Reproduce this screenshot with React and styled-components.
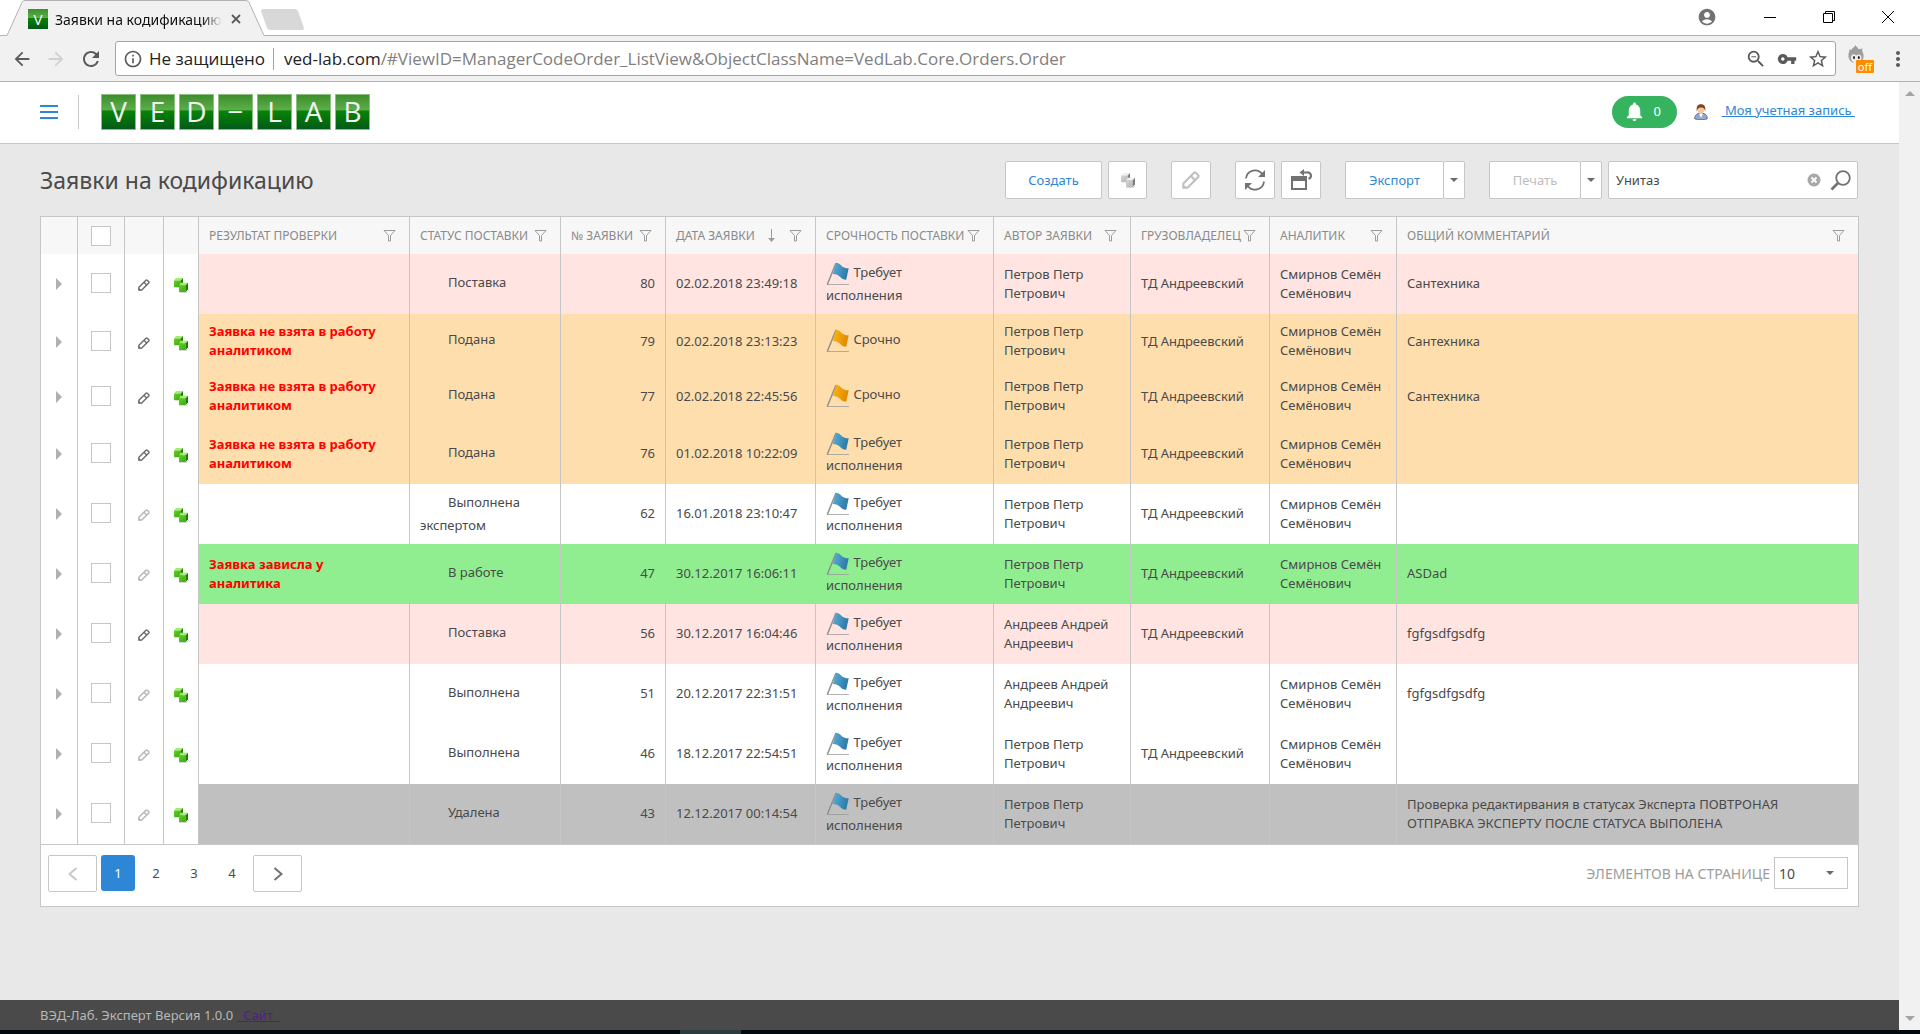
import React, { useState } from 'react'
import styled, { createGlobalStyle, css } from 'styled-components'
import {
    MdAccountCircle,
    MdArrowBack,
    MdArrowForward,
    MdInfoOutline,
    MdMoreVert,
    MdRefresh,
    MdStarBorder,
    MdVpnKey,
    MdZoomOut,
    MdNotifications,
} from 'react-icons/md'

const orders = [
    { id: 80, tone: '#ffe4e1', editable: true, check: '', status: 'Поставка', date: '02.02.2018 23:49:18', urgency: 'Требует исполнения', author: 'Петров Петр Петрович', owner: 'ТД Андреевский', analyst: 'Смирнов Семён Семёнович', comment: 'Сантехника' },
    { id: 79, tone: '#ffdead', editable: true, check: 'Заявка не взята в работу аналитиком', status: 'Подана', date: '02.02.2018 23:13:23', urgency: 'Срочно', author: 'Петров Петр Петрович', owner: 'ТД Андреевский', analyst: 'Смирнов Семён Семёнович', comment: 'Сантехника' },
    { id: 77, tone: '#ffdead', editable: true, check: 'Заявка не взята в работу аналитиком', status: 'Подана', date: '02.02.2018 22:45:56', urgency: 'Срочно', author: 'Петров Петр Петрович', owner: 'ТД Андреевский', analyst: 'Смирнов Семён Семёнович', comment: 'Сантехника' },
    { id: 76, tone: '#ffdead', editable: true, check: 'Заявка не взята в работу аналитиком', status: 'Подана', date: '01.02.2018 10:22:09', urgency: 'Требует исполнения', author: 'Петров Петр Петрович', owner: 'ТД Андреевский', analyst: 'Смирнов Семён Семёнович', comment: '' },
    { id: 62, tone: '#ffffff', editable: false, check: '', status: 'Выполнена экспертом', date: '16.01.2018 23:10:47', urgency: 'Требует исполнения', author: 'Петров Петр Петрович', owner: 'ТД Андреевский', analyst: 'Смирнов Семён Семёнович', comment: '' },
    { id: 47, tone: '#90ee90', editable: false, check: 'Заявка зависла у аналитика', status: 'В работе', date: '30.12.2017 16:06:11', urgency: 'Требует исполнения', author: 'Петров Петр Петрович', owner: 'ТД Андреевский', analyst: 'Смирнов Семён Семёнович', comment: 'ASDad' },
    { id: 56, tone: '#ffe4e1', editable: true, check: '', status: 'Поставка', date: '30.12.2017 16:04:46', urgency: 'Требует исполнения', author: 'Андреев Андрей Андреевич', owner: 'ТД Андреевский', analyst: '', comment: 'fgfgsdfgsdfg' },
    { id: 51, tone: '#ffffff', editable: false, check: '', status: 'Выполнена', date: '20.12.2017 22:31:51', urgency: 'Требует исполнения', author: 'Андреев Андрей Андреевич', owner: '', analyst: 'Смирнов Семён Семёнович', comment: 'fgfgsdfgsdfg' },
    { id: 46, tone: '#ffffff', editable: false, check: '', status: 'Выполнена', date: '18.12.2017 22:54:51', urgency: 'Требует исполнения', author: 'Петров Петр Петрович', owner: 'ТД Андреевский', analyst: 'Смирнов Семён Семёнович', comment: '' },
    { id: 43, tone: '#c0c0c0', editable: false, check: '', status: 'Удалена', date: '12.12.2017 00:14:54', urgency: 'Требует исполнения', author: 'Петров Петр Петрович', owner: '', analyst: '', comment: 'Проверка редактирвания в статусах Эксперта ПОВТРОНАЯ ОТПРАВКА ЭКСПЕРТУ ПОСЛЕ СТАТУСА ВЫПОЛЕНА' },
]

const columns = [
    { title: 'Результат проверки', width: 211 },
    { title: 'Статус поставки', width: 151 },
    { title: '№ заявки', width: 105 },
    { title: 'Дата заявки', width: 150, sorted: true },
    { title: 'Срочность поставки', width: 178 },
    { title: 'Автор заявки', width: 137 },
    { title: 'Грузовладелец', width: 139 },
    { title: 'Аналитик', width: 127 },
    { title: 'Общий комментарий' },
]

/* ---------- icons ---------- */

const FunnelIcon = () => (
    <svg width="13" height="12" viewBox="0 0 13 12" fill="none" stroke="#9c9c9c" aria-hidden="true">
        <path d="M1 .5h11L7.500 5.500v5.500h-2V5.500z" />
    </svg>
)

const SortIcon = () => (
    <svg width="9" height="13" viewBox="0 0 9 13" aria-hidden="true">
        <path d="M4.500 0v10" stroke="#9c9c9c" fill="none" />
        <path d="M1 9h7l-3.500 4z" fill="#9c9c9c" />
    </svg>
)

const PencilIcon = ({ size = 12, color }) => (
    <svg width={size} height={size} viewBox="0 0 12 12" fill="none" stroke={color} strokeWidth="1.400" strokeLinejoin="round" aria-hidden="true">
        <path d="M.9 11.100V8.300L8 1.200q.6-.5 1.200 0l1.600 1.600q.5.600 0 1.200L3.700 11.100z" />
        <path d="M5.900 3.300l2.800 2.800" />
        <path d="M.5 11.500V8.600l2.900 2.900z" fill={color} stroke="none" />
    </svg>
)

const cubeTones = {
    green: ['#a4ec74', '#66d02a', '#37a80c', '#1a7d04'],
    grey: ['#f0f0f0', '#d6d6d6', '#b4b4b4', '#7d7d7d'],
}

const CubesIcon = ({ tone = 'green' }) => {
    const [top, light, dark, side] = cubeTones[tone]
    return (
        <svg width="16" height="16" viewBox="0 0 16 16" aria-hidden="true">
            <defs>
                <linearGradient id={`cube-${tone}`} x1="0" y1="0" x2="1" y2="1">
                    <stop offset="0" stopColor={light} />
                    <stop offset="1" stopColor={dark} />
                </linearGradient>
            </defs>
            <path d="M6 15.500h7.500l2-2" stroke="#000" opacity=".15" fill="none" />
            <path d="M1 3.500L3 1h7L7.800 3.500z" fill={top} />
            <path d="M1 3.500h6.800v6.700H1.500L1 9.700z" fill={`url(#cube-${tone})`} />
            <path d="M7.800 3.500L10 1v6.500l-2.200 2.700z" fill={side} />
            <path d="M6 8.200l2-2.500h7l-2.200 2.500z" fill={top} />
            <path d="M6 8.200h6.800V15H6.500L6 14.500z" fill={`url(#cube-${tone})`} />
            <path d="M12.800 8.200L15 5.700v6.600L12.800 15z" fill={side} />
        </svg>
    )
}

const flagTones = {
    blue: ['#5cb0dc', '#2d7ba6'],
    orange: ['#fdb913', '#e08a00'],
}

const FlagIcon = ({ tone }) => (
    <svg width="24" height="24" viewBox="0 0 24 24" aria-hidden="true">
        <defs>
            <linearGradient id={`flag-${tone}`} x1="0" y1="0" x2="1" y2="0.3">
                <stop offset="0" stopColor={flagTones[tone][0]} />
                <stop offset="1" stopColor={flagTones[tone][1]} />
            </linearGradient>
        </defs>
        <path d="M1.500 22.500h21" stroke="#9a9a9a" strokeWidth="1.200" strokeLinecap="round" opacity=".75" />
        <path d="M1.500 22L9.800 1.500" stroke="#8f8f8f" strokeWidth="1.500" strokeLinecap="round" />
        <path d="M10 .8c2 .1 3.500.7 5.200 2.600 1.600 1.900 3.900 2.700 7.500 2.900L20.200 17.800c-2.700 0-4.700-1.200-6.200-3-1.600-1.900-3.900-2.800-7.200-2.900z" fill={`url(#flag-${tone})`} />
    </svg>
)

const RefreshIcon = () => (
    <svg width="22" height="22" viewBox="0 0 22 22" fill="none" stroke="#727272" strokeWidth="1.800" aria-hidden="true">
        <path d="M2 9.500A9 9 0 0 1 18.500 5.500M20 12.500A9 9 0 0 1 3.500 16.500" />
        <path d="M21 1v7h-7zM1 21v-7h7z" fill="#727272" stroke="none" />
    </svg>
)

const ResetViewIcon = () => (
    <svg width="22" height="22" viewBox="0 0 22 22" aria-hidden="true">
        <path d="M1 7h16v14H1zM3 12v7h12v-7z" fill="#727272" fillRule="evenodd" />
        <path d="M13 3.500h4a3.200 3.200 0 0 1 1.500 6.300" fill="none" stroke="#727272" strokeWidth="2.200" />
        <path d="M9.500 3.500L14 0v7z" fill="#727272" />
    </svg>
)

const MagnifierIcon = () => (
    <svg width="21" height="21" viewBox="0 0 21 21" fill="none" stroke="#727272" aria-hidden="true">
        <circle cx="13" cy="8" r="6.800" strokeWidth="1.800" />
        <path d="M8 13l-6.500 6.500" strokeWidth="2.600" />
    </svg>
)

const ClearIcon = () => (
    <svg width="14" height="14" viewBox="0 0 14 14" aria-hidden="true">
        <circle cx="7" cy="7" r="6.500" fill="#a8a8a8" />
        <path d="M4.500 4.500l5 5M9.500 4.500l-5 5" stroke="#fff" strokeWidth="1.800" />
    </svg>
)

const PersonIcon = () => (
    <svg width="14" height="16" viewBox="0 0 14 16" aria-hidden="true">
        <path d="M.7 14.800c0-3 1.300-5.600 6.300-5.600s6.300 2.600 6.300 5.600c-2.300 1.200-10.300 1.200-12.600 0z" fill="#93a9cb" stroke="#4c5f80" strokeWidth=".8" />
        <path d="M5 9.500l2 4.500 2-4.500z" fill="#fff" />
        <ellipse cx="7" cy="5.800" rx="3.300" ry="3.800" fill="#f0c9a0" />
        <path d="M2.800 7.500C2 2 4.300.2 7 .2S12 2 11.200 7.500C10.600 4.500 9.500 3.300 6.500 3.600 4.500 3.800 3.600 5 2.800 7.500z" fill="#7d4420" />
    </svg>
)

const FoxIcon = () => (
    <svg width="16" height="20" viewBox="0 0 16 20" aria-hidden="true">
        <path d="M7.500 0c.3 1.500 2.500 2.300 3 4.300L14.500 3.500c-.6 1.500-.3 2.500.2 3.500 1.300 3 1.300 6.500-.7 9-2.200 3-9.300 3-11.700 0C0 13 0 9.500 1.200 6.500L1.700 4l1.600 1.300C3.800 2.800 6.800 2.500 7.500 0z" fill="#9e9e9e" />
        <path d="M3 12c1-3.500 3-3 5.300-1.500C10.500 9 12.700 8.800 13.500 12c.5 3-2 6.500-5.200 6.500S2.500 15 3 12z" fill="#ececec" />
        <ellipse cx="6" cy="12.500" rx="1" ry="1.500" fill="#222" />
        <ellipse cx="10.800" cy="12.500" rx="1" ry="1.500" fill="#222" />
    </svg>
)

const ChevronIcon = ({ flip, color }) => (
    <svg width="10" height="14" viewBox="0 0 10 14" fill="none" stroke={color} strokeWidth="2" aria-hidden="true">
        <path d={flip ? 'M8.500 1l-7 6 7 6' : 'M1.500 1l7 6-7 6'} />
    </svg>
)

/* ---------- page ---------- */

function BrowserChrome() {
    return (
        <>
            <TabStrip>
                <TabArea>
                    <TabShape viewBox="0 0 310 36" aria-hidden="true">
                        <path d="M0 35.500H7L22 2.500Q23 .5 25 .5H246Q248 .5 249 2.500L264 35.500H310V37H0z" fill="#f1f1f1" />
                        <path d="M264 35.500H310V37H264z" fill="#fff" />
                        <path d="M0 35.500H7L22 2.500Q23 .5 25 .5H246Q248 .5 249 2.500L264 35.500H310" fill="none" stroke="#b2b2b2" />
                        <path d="M263 9h32q2 0 3 2l6 17q0 2-2 2h-32q-2 0-3-2l-6-17q0-2 2-2z" fill="#d8d8d8" />
                    </TabShape>
                    <TabBody>
                        <Favicon>V</Favicon>
                        <TabTitle>Заявки на кодификацию</TabTitle>
                        <ChromeButton type="button" aria-label="Закрыть вкладку" $w={14}>
                            <svg width="10" height="10" viewBox="0 0 10 10" stroke="#5a5a5a" strokeWidth="1.800"><path d="M1 1l8 8M9 1L1 9" /></svg>
                        </ChromeButton>
                    </TabBody>
                </TabArea>
                <WindowControls>
                    <ChromeButton type="button" aria-label="Профиль" $w={20}><MdAccountCircle size={20} color="#727272" /></ChromeButton>
                    <ChromeButton type="button" aria-label="Свернуть" $w={12}>
                        <svg width="12" height="12" viewBox="0 0 12 12" stroke="#000"><path d="M0 6.500h12" /></svg>
                    </ChromeButton>
                    <ChromeButton type="button" aria-label="Развернуть" $w={12}>
                        <svg width="12" height="12" viewBox="0 0 12 12" stroke="#000" fill="none"><path d="M.5 2.500h9v9h-9zM2.500 2V.5h9v9H10" /></svg>
                    </ChromeButton>
                    <ChromeButton type="button" aria-label="Закрыть" $w={12}>
                        <svg width="12" height="12" viewBox="0 0 12 12" stroke="#000"><path d="M0 0l12 12M12 0L0 12" /></svg>
                    </ChromeButton>
                </WindowControls>
            </TabStrip>
            <AddressRow>
                <ChromeButton type="button" aria-label="Назад" $w={22}><MdArrowBack size={22} color="#5a5a5a" /></ChromeButton>
                <ChromeButton type="button" aria-label="Вперёд" $w={22}><MdArrowForward size={22} color="#d0d0d0" /></ChromeButton>
                <ChromeButton type="button" aria-label="Обновить" $w={24}><MdRefresh size={24} color="#5a5a5a" /></ChromeButton>
                <Omnibox>
                    <MdInfoOutline size={20} color="#5a5a5a" />
                    <Insecure>Не защищено</Insecure>
                    <Url><b>ved-lab.com</b>/#ViewID=ManagerCodeOrder_ListView&amp;ObjectClassName=VedLab.Core.Orders.Order</Url>
                    <OmniActions>
                        <MdZoomOut size={22} />
                        <MdVpnKey size={20} />
                        <MdStarBorder size={22} />
                    </OmniActions>
                </Omnibox>
                <Extension>
                    <FoxIcon />
                    <OffBadge>off</OffBadge>
                </Extension>
                <ChromeButton type="button" aria-label="Меню" $w={24}><MdMoreVert size={24} color="#5a5a5a" /></ChromeButton>
            </AddressRow>
        </>
    )
}

function OrderRow({ order, selected, onToggle }) {
    const urgent = order.urgency === 'Срочно'
    return (
        <tr>
            <ToolCell $raised>
                <Expander type="button" aria-label={`Развернуть заявку ${order.id}`} />
            </ToolCell>
            <ToolCell $raised>
                <CheckBox type="checkbox" aria-label={`Выбрать заявку ${order.id}`} checked={selected} onChange={() => onToggle(order.id)} />
            </ToolCell>
            <ToolCell>
                <IconButton type="button" aria-label="Изменить" disabled={!order.editable}>
                    <PencilIcon color={order.editable ? '#6a6a6a' : '#b5b5b5'} />
                </IconButton>
            </ToolCell>
            <ToolCell>
                <IconButton type="button" aria-label="Копировать"><CubesIcon /></IconButton>
            </ToolCell>
            <Cell $tone={order.tone} $narrow><Warning>{order.check}</Warning></Cell>
            <Cell $tone={order.tone}><StatusGap />{order.status}</Cell>
            <Cell $tone={order.tone} $right>{order.id}</Cell>
            <Cell $tone={order.tone}>{order.date}</Cell>
            <Cell $tone={order.tone} $narrow><FlagIcon tone={urgent ? 'orange' : 'blue'} /> {order.urgency}</Cell>
            <Cell $tone={order.tone}>{order.author}</Cell>
            <Cell $tone={order.tone}>{order.owner}</Cell>
            <Cell $tone={order.tone}>{order.analyst}</Cell>
            <Cell $tone={order.tone}><Comment>{order.comment}</Comment></Cell>
        </tr>
    )
}

function App() {
    const [selected, setSelected] = useState([])
    const [query, setQuery] = useState('Унитаз')

    const toggle = (id) => {
        setSelected(selected.includes(id) ? selected.filter((x) => x !== id) : [...selected, id])
    }

    const toggleAll = () => {
        setSelected(selected.length === orders.length ? [] : orders.map((o) => o.id))
    }

    return (
        <Screen>
            <GlobalStyle />
            <BrowserChrome />
            <Viewport>
                <Page>
                    <Header>
                        <MenuButton type="button" aria-label="Навигация"><i /><i /><i /></MenuButton>
                        <Logo href="#">
                            {'VED−LAB'.split('').map((letter, i) => <LogoTile key={i}>{letter}</LogoTile>)}
                        </Logo>
                        <BellButton type="button" aria-label="Уведомления">
                            <MdNotifications size={23} />
                            <span>0</span>
                        </BellButton>
                        <PersonIcon />
                        <AccountLink href="#account">&nbsp;Моя учетная запись&nbsp;</AccountLink>
                    </Header>

                    <Main>
                        <TitleRow>
                            <Title>Заявки на кодификацию</Title>
                            <Toolbar>
                                <Group>
                                    <ToolButton type="button" $w={97}>Создать</ToolButton>
                                    <ToolButton type="button" $w={39} aria-label="Клонировать"><CubesIcon tone="grey" /></ToolButton>
                                </Group>
                                <Group>
                                    <ToolButton type="button" $w={40} disabled aria-label="Изменить"><PencilIcon size={18} color="#c0c0c0" /></ToolButton>
                                </Group>
                                <Group>
                                    <ToolButton type="button" $w={40} aria-label="Обновить"><RefreshIcon /></ToolButton>
                                    <ToolButton type="button" $w={40} aria-label="Сбросить настройки"><ResetViewIcon /></ToolButton>
                                </Group>
                                <Split>
                                    <ToolButton type="button" $w={99}>Экспорт</ToolButton>
                                    <ToolButton type="button" $w={22} aria-label="Форматы экспорта"><Caret /></ToolButton>
                                </Split>
                                <Group>
                                    <Split>
                                        <ToolButton type="button" $w={92} disabled>Печать</ToolButton>
                                        <ToolButton type="button" $w={22} aria-label="Варианты печати"><Caret /></ToolButton>
                                    </Split>
                                    <SearchBox>
                                        <input type="text" aria-label="Поиск" value={query} onChange={(e) => setQuery(e.target.value)} />
                                        <IconButton type="button" aria-label="Очистить" onClick={() => setQuery('')}><ClearIcon /></IconButton>
                                        <IconButton type="button" aria-label="Найти"><MagnifierIcon /></IconButton>
                                    </SearchBox>
                                </Group>
                            </Toolbar>
                        </TitleRow>

                        <GridFrame>
                            <Table>
                                <colgroup>
                                    <Col $w={37} />
                                    <Col $w={47} />
                                    <Col $w={39} />
                                    <Col $w={35} />
                                    {columns.map((c) => <Col key={c.title} $w={c.width} />)}
                                </colgroup>
                                <thead>
                                    <tr>
                                        <HeadCell />
                                        <HeadCell $tool>
                                            <CheckBox type="checkbox" aria-label="Выбрать все" checked={selected.length === orders.length} onChange={toggleAll} />
                                        </HeadCell>
                                        <HeadCell />
                                        <HeadCell />
                                        {columns.map((c) => (
                                            <HeadCell key={c.title}>
                                                <HeadContent>
                                                    <span>{c.title}</span>
                                                    {c.sorted && <SortIcon />}
                                                    <FunnelIcon />
                                                </HeadContent>
                                            </HeadCell>
                                        ))}
                                    </tr>
                                </thead>
                                <tbody>
                                    {orders.map((order) => (
                                        <OrderRow key={order.id} order={order} selected={selected.includes(order.id)} onToggle={toggle} />
                                    ))}
                                </tbody>
                            </Table>
                            <Pager>
                                <PageArrow type="button" disabled aria-label="Предыдущая"><ChevronIcon flip color="#c8c8c8" /></PageArrow>
                                <PageNumber type="button" $active>1</PageNumber>
                                <PageNumber type="button">2</PageNumber>
                                <PageNumber type="button">3</PageNumber>
                                <PageNumber type="button">4</PageNumber>
                                <PageArrow type="button" aria-label="Следующая"><ChevronIcon color="#727272" /></PageArrow>
                                <PageSize>
                                    <label htmlFor="page-size">Элементов на странице</label>
                                    <SelectWrap>
                                        <select id="page-size" defaultValue="10">
                                            <option>10</option>
                                            <option>20</option>
                                            <option>50</option>
                                        </select>
                                        <Caret />
                                    </SelectWrap>
                                </PageSize>
                            </Pager>
                        </GridFrame>
                    </Main>

                    <Footer>
                        ВЭД-Лаб. Эксперт Версия 1.0.0 <a href="#site">&nbsp;&nbsp;Сайт&nbsp;&nbsp;</a>
                    </Footer>
                </Page>
                <ScrollTrack>
                    <ScrollArrow $up />
                    <ScrollArrow />
                </ScrollTrack>
            </Viewport>
            <Taskbar><span /></Taskbar>
        </Screen>
    )
}

const GlobalStyle = createGlobalStyle`
    * {
        box-sizing: border-box;
    }
    body {
        margin: 0;
        font-family: 'Noto Sans', 'Open Sans', sans-serif;
        font-size: 13px;
        line-height: 19px;
        color: #4a4a4a;
    }
    button, input, select {
        font: inherit;
        color: inherit;
        margin: 0;
    }
    svg {
        flex: none;
    }
`;

const Screen = styled.div`
    min-height: 100vh;
    display: flex;
    flex-direction: column;
`;

const ChromeButton = styled.button`
    width: ${(p) => p.$w}px;
    padding: 0;
    border: 0;
    background: none;
    display: flex;
    justify-content: center;
    align-items: center;
    flex: none;
`;

const TabStrip = styled.div`
    height: 36px;
    display: flex;
    justify-content: space-between;
    background: linear-gradient(#fff 35px, #b2b2b2 35px);
`;

const TabArea = styled.div`
    width: 310px;
    position: relative;
`;

const TabShape = styled.svg`
    position: absolute;
    inset: 0;
    width: 310px;
    height: 36px;
`;

const TabBody = styled.div`
    position: relative;
    height: 36px;
    padding: 2px 67px 0 28px;
    display: flex;
    align-items: center;
    gap: 7px;
`;

const glossyGreen = css`
    color: #f2f2f2;
    background: linear-gradient(#3c8f2c 0%, #5fae4c 45%, #078407 46%, #046a10 80%, #04591a 100%);
`;

const Favicon = styled.span`
    ${glossyGreen}
    width: 20px;
    height: 20px;
    font-size: 15px;
    line-height: 20px;
    text-align: center;
`;

const TabTitle = styled.span`
    flex: 1;
    font-size: 14px;
    color: #111;
    overflow: hidden;
    white-space: nowrap;
    mask-image: linear-gradient(90deg, #000 88%, transparent);
`;

const WindowControls = styled.div`
    display: flex;
    align-items: center;
    gap: 47px;
    padding: 0 26px 3px 0;
`;

const AddressRow = styled.div`
    height: 46px;
    display: flex;
    align-items: center;
    gap: 12px;
    padding: 0 10px 0 11px;
    background: #f1f1f1;
    border-bottom: 1px solid #b2b2b2;
`;

const Omnibox = styled.div`
    flex: 1;
    min-width: 0;
    height: 35px;
    display: flex;
    align-items: center;
    padding: 0 6px 0 7px;
    background: #fff;
    border: 1px solid #a5a5a5;
    border-radius: 3px;
    font-family: 'Open Sans', sans-serif;
    font-size: 17px;
    line-height: 22px;
`;

const Insecure = styled.span`
    margin: 0 10px 0 6px;
    padding-right: 8px;
    border-right: 1px solid #a5a5a5;
    color: #222;
`;

const Url = styled.span`
    flex: 1;
    min-width: 0;
    overflow: hidden;
    white-space: nowrap;
    color: #808080;
    b {
        font-weight: 400;
        color: #222;
    }
`;

const OmniActions = styled.span`
    display: flex;
    align-items: center;
    gap: 10px;
    color: #5a5a5a;
`;

const Extension = styled.div`
    position: relative;
    width: 26px;
    height: 28px;
`;

const OffBadge = styled.span`
    position: absolute;
    right: 0;
    bottom: 0;
    padding: 0 2px;
    font-size: 11px;
    line-height: 13px;
    color: #fff;
    background: #ff8c00;
    border-radius: 1px;
`;

const Viewport = styled.div`
    flex: 1;
    display: flex;
`;

const Page = styled.div`
    flex: 1;
    min-width: 0;
    display: flex;
    flex-direction: column;
    background: #e8e8e8;
`;

const Header = styled.header`
    height: 62px;
    display: flex;
    align-items: center;
    padding: 0 44px 2px 40px;
    background: #fff;
    border-bottom: 1px solid #c6c6c6;
`;

const MenuButton = styled.button`
    height: 34px;
    padding: 0 20px 0 0;
    border: 0;
    border-right: 1px solid #c6c6c6;
    background: none;
    display: flex;
    flex-direction: column;
    justify-content: center;
    gap: 4px;
    i {
        width: 18px;
        height: 2px;
        background: #2d87d6;
    }
`;

const Logo = styled.a`
    display: flex;
    gap: 4px;
    margin: 0 auto 0 22px;
    text-decoration: none;
`;

const LogoTile = styled.span`
    ${glossyGreen}
    width: 35px;
    height: 36px;
    border: 1px solid #8cc07f;
    font-family: 'Open Sans', sans-serif;
    font-size: 28px;
    line-height: 32px;
    text-align: center;
`;

const BellButton = styled.button`
    width: 65px;
    height: 32px;
    margin-right: 17px;
    padding: 0 8px 0 4px;
    border: 0;
    border-radius: 16px;
    background: #36b35f;
    color: #fff;
    display: flex;
    align-items: center;
    justify-content: space-evenly;
`;

const AccountLink = styled.a`
    margin-left: 14px;
    padding-bottom: 2px;
    color: #2d87d6;
`;

const Main = styled.main`
    flex: 1;
    padding: 17px 40px;
`;

const TitleRow = styled.div`
    display: flex;
    justify-content: space-between;
    align-items: center;
    margin-bottom: 17px;
    padding-right: 1px;
`;

const Title = styled.h1`
    margin: 0;
    font-size: 23px;
    line-height: 30px;
    font-weight: 400;
`;

const Toolbar = styled.div`
    display: flex;
    gap: 24px;
`;

const Group = styled.div`
    display: flex;
    gap: 6px;
`;

const ToolButton = styled.button`
    width: ${(p) => p.$w}px;
    height: 38px;
    padding: 0;
    display: flex;
    align-items: center;
    justify-content: center;
    background: #fff;
    border: 1px solid #c6c6c6;
    border-radius: 2px;
    color: #2d87d6;
    &:disabled {
        color: #bdbdbd;
    }
`;

const Split = styled.div`
    display: flex;
    ${ToolButton} + ${ToolButton} {
        margin-left: -1px;
    }
`;

const Caret = styled.span`
    border: 4px solid transparent;
    border-top-color: #6a6a6a;
    border-bottom: 0;
`;

const IconButton = styled.button`
    padding: 0;
    border: 0;
    background: none;
    display: inline-flex;
`;

const SearchBox = styled.div`
    width: 250px;
    height: 38px;
    display: flex;
    align-items: center;
    gap: 9px;
    padding: 0 6px 0 7px;
    background: #fff;
    border: 1px solid #c6c6c6;
    border-radius: 2px;
    input {
        flex: 1;
        min-width: 0;
        padding: 0;
        border: 0;
        outline: 0;
    }
`;

const GridFrame = styled.section`
    background: #fff;
    border: 1px solid #c6c6c6;
`;

const Table = styled.table`
    width: 100%;
    table-layout: fixed;
    border-collapse: separate;
    border-spacing: 0;
    border-bottom: 1px solid #c6c6c6;
`;

const Col = styled.col`
    width: ${(p) => (p.$w ? `${p.$w}px` : 'auto')};
`;

const HeadCell = styled.th`
    height: 37px;
    padding: ${(p) => (p.$tool ? '0' : '0 13px 0 10px')};
    background: #f7f7f7;
    border-right: 1px solid #c6c6c6;
    font-weight: 400;
    &:last-child {
        border-right: 0;
    }
`;

const HeadContent = styled.div`
    display: flex;
    align-items: center;
    gap: 4px;
    font-size: 12px;
    line-height: 16px;
    color: #8a8a8a;
    text-align: left;
    text-transform: uppercase;
    white-space: nowrap;
    span {
        flex: 1;
        min-width: 0;
    }
    svg + svg {
        margin-left: 9px;
    }
`;

const Cell = styled.td`
    padding: 8px ${(p) => (p.$narrow ? 24 : 10)}px 9px 10px;
    background: ${(p) => p.$tone};
    border-right: 1px solid #c6c6c6;
    text-align: ${(p) => (p.$right ? 'right' : 'left')};
    vertical-align: middle;
    svg {
        vertical-align: middle;
    }
    &:last-child {
        border-right: 0;
    }
`;

const ToolCell = styled.td`
    padding: ${(p) => (p.$raised ? '0 0 2px' : '0')};
    border-right: 1px solid #c6c6c6;
    text-align: center;
    vertical-align: middle;
    > * {
        vertical-align: middle;
    }
`;

const Expander = styled.button`
    width: 6px;
    height: 12px;
    padding: 0;
    border: 6px solid transparent;
    border-left-color: #b0b0b0;
    border-right: 0;
    background: none;
`;

const CheckBox = styled.input`
    appearance: none;
    width: 20px;
    height: 20px;
    margin: 0;
    vertical-align: middle;
    background: #fff;
    border: 1px solid #c6c6c6;
    &:checked {
        background: #2d87d6;
    }
`;

const Warning = styled.strong`
    color: #f00;
`;

const StatusGap = styled.span`
    display: inline-block;
    width: 28px;
    height: 24px;
    vertical-align: -9px;
`;

const Comment = styled.div`
    max-width: 400px;
`;

const Pager = styled.nav`
    height: 61px;
    display: flex;
    align-items: flex-start;
    gap: 4px;
    padding: 10px 10px 0 7px;
`;

const PageArrow = styled.button`
    width: 49px;
    height: 37px;
    padding: 0;
    display: flex;
    align-items: center;
    justify-content: center;
    background: #fff;
    border: 1px solid #c6c6c6;
    border-radius: 2px;
`;

const PageNumber = styled.button`
    width: 34px;
    height: 36px;
    padding: 0;
    border: 0;
    border-radius: 3px;
    background: ${(p) => (p.$active ? '#2d87d6' : 'none')};
    color: ${(p) => (p.$active ? '#fff' : 'inherit')};
`;

const PageSize = styled.div`
    margin-left: auto;
    display: flex;
    align-items: center;
    gap: 4px;
    height: 36px;
    font-size: 14px;
    color: #9c9c9c;
    text-transform: uppercase;
`;

const SelectWrap = styled.div`
    position: relative;
    color: #4a4a4a;
    select {
        appearance: none;
        width: 74px;
        height: 32px;
        padding: 0 4px;
        background: #fff;
        border: 1px solid #c6c6c6;
        border-radius: 0;
    }
    ${Caret} {
        position: absolute;
        right: 14px;
        top: 14px;
        pointer-events: none;
    }
`;

const Footer = styled.footer`
    height: 30px;
    padding: 6px 40px;
    background: #4a4a4a;
    color: #b8b8b8;
    a {
        color: #551a8b;
    }
`;

const ScrollTrack = styled.div`
    width: 21px;
    display: flex;
    flex-direction: column;
    justify-content: space-between;
    align-items: center;
    padding: 9px 0;
    background: #f1f1f1;
`;

const ScrollArrow = styled.span`
    border: 5px solid transparent;
    ${(p) => (p.$up ? 'border-bottom-color' : 'border-top-color')}: #a3a3a3;
    ${(p) => (p.$up ? 'border-top' : 'border-bottom')}: 0;
`;

const Taskbar = styled.div`
    height: 4px;
    background: #020a10;
    span {
        display: block;
        width: 61px;
        height: 4px;
        margin-left: 680px;
        background: #2c3b3e;
    }
`;

export default App
